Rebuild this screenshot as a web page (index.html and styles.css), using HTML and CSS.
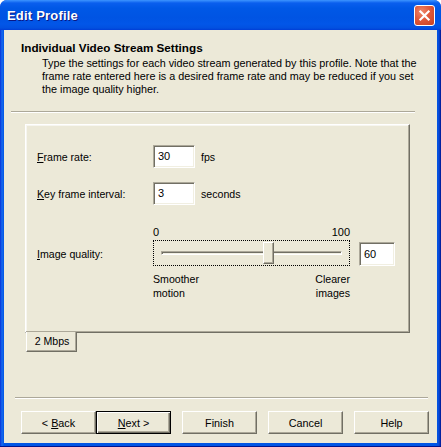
FILE: index.html
```html
<!DOCTYPE html>
<html>
<head>
<meta charset="utf-8">
<link rel="stylesheet" href="styles.css">
</head>
<body>
<div class="window">
  <div class="titlebar">
    <span class="title">Edit Profile</span>
    <span class="close">
      <svg width="21" height="21" viewBox="0 0 21 21">
        <path d="M6 6 L15 15 M15 6 L6 15" stroke="#fff" stroke-width="2.4" stroke-linecap="square"/>
      </svg>
    </span>
  </div>
  <div class="frame">
    <div class="client">
      <div class="header">
        <div class="h-title">Individual Video Stream Settings</div>
        <div class="h-desc">Type the settings for each video stream generated by this profile. Note that the frame rate entered here is a desired frame rate and may be reduced if you set the image quality higher.</div>
      </div>
      <div class="sep sep-top"></div>
      <div class="tabs">
        <div class="panel">
          <div class="row">
            <span class="label"><u>F</u>rame rate:</span>
            <span class="field">30</span>
            <span class="unit">fps</span>
          </div>
          <div class="row row2">
            <span class="label"><u>K</u>ey frame interval:</span>
            <span class="field">3</span>
            <span class="unit">seconds</span>
          </div>
          <div class="quality">
            <span class="label qlabel"><u>I</u>mage quality:</span>
            <div class="slidercol">
              <div class="scale"><span>0</span><span>100</span></div>
              <div class="sliderrow">
                <div class="slider">
                  <div class="track"></div>
                  <div class="thumb"></div>
                </div>
                <span class="field small">60</span>
              </div>
              <div class="ends"><span>Smoother<br>motion</span><span class="right">Clearer<br>images</span></div>
            </div>
          </div>
        </div>
        <div class="tab">2 Mbps</div>
      </div>
      <div class="sep sep-bottom"></div>
      <div class="buttons">
        <div class="group">
          <span class="btn"><span>&lt; <u>B</u>ack</span></span>
          <span class="btn default"><span><u>N</u>ext &gt;</span></span>
        </div>
        <span class="btn"><span>Finish</span></span>
        <span class="btn"><span>Cancel</span></span>
        <span class="btn"><span>Help</span></span>
      </div>
    </div>
  </div>
</div>
</body>
</html>
```
FILE: styles.css
```css
html, body {
  margin: 0;
  padding: 0;
  background: #ffffff;
}
body {
  font-family: Tahoma, "Liberation Sans", Arial, sans-serif;
  font-size: 11px;
  color: #000;
}
.window {
  width: 441px;
  height: 447px;
  display: flex;
  flex-direction: column;
  background: #0a3fd8;
  border-radius: 7px 7px 0 0;
  overflow: hidden;
}
.titlebar {
  height: 30px;
  flex: none;
  display: flex;
  align-items: center;
  justify-content: space-between;
  padding: 0 6px 0 7px;
  background: linear-gradient(to bottom, #3d95ff 0px, #0a5fee 3px, #0058e6 8px, #0054e3 18px, #0256e8 24px, #0250e0 28px, #003dd7 30px);
}
.title {
  color: #fff;
  font-family: "Liberation Sans", Arial, sans-serif;
  font-weight: bold;
  font-size: 13px;
  text-shadow: 1px 1px #0a1883;
  letter-spacing: 0.2px;
  padding-top: 1px;
}
.close {
  width: 21px;
  height: 21px;
  border: 1px solid #fff;
  border-radius: 3px;
  background: radial-gradient(circle at 35% 30%, #f0886a 0%, #e0593b 45%, #c9401f 100%);
  box-sizing: border-box;
  display: flex;
  align-items: center;
  justify-content: center;
  margin-top: 1px;
}
.close svg { width: 19px; height: 19px; }
.frame {
  flex: 1;
  display: flex;
  padding: 0 4px 4px 4px;
  background: linear-gradient(to right, #0831d9 0, #166aee 2px, #0055e5 4px, #0055e5 calc(100% - 4px), #0a4ad7 calc(100% - 2px), #00138c 100%);
  box-shadow: inset 0 -1px #00138c;
}
.client {
  flex: 1;
  background: #ece9d8;
  display: flex;
  flex-direction: column;
}
.header {
  padding: 11px 18px 0 17px;
  height: 73px;
  box-sizing: border-box;
}
.h-title {
  font-weight: bold;
  line-height: 14px;
  font-size: 11.7px;
  font-family: "Liberation Sans", Arial, sans-serif;
}
.h-desc {
  margin-top: 2px;
  padding-left: 21px;
  line-height: 13px;
  font-size: 10.8px;
}
.sep {
  border-top: 1px solid #aca899;
  border-bottom: 1px solid #fff;
  height: 0;
}
.sep-top {
  margin: 8px 22px 0 7px;
}
.tabs {
  margin: 11px 0 0 21px;
  width: 385px;
  display: flex;
  flex-direction: column;
}
.panel {
  height: 209px;
  box-sizing: border-box;
  border-top: 1px solid #fff;
  border-left: 1px solid #fff;
  border-right: 1px solid #716f64;
  border-bottom: 1px solid #716f64;
  box-shadow: inset -1px -1px #aca899, inset 1px 1px #f7f6f0;
  padding: 20px 0 0 11px;
  font-size: 10.6px;
}
.row {
  display: flex;
  align-items: center;
  height: 23px;
}
.row2 { margin-top: 14px; }
.label {
  width: 116px;
  flex: none;
}
.field {
  width: 42px;
  height: 23px;
  box-sizing: border-box;
  background: #fff;
  border-top: 1px solid #aca899;
  border-left: 1px solid #aca899;
  border-right: 1px solid #fff;
  border-bottom: 1px solid #fff;
  box-shadow: inset 1px 1px #716f64, inset -1px -1px #f1efe2;
  padding: 3px 0 0 4px;
  line-height: 14px;
  font-size: 11px;
}
.field.small { width: 36px; height: 24px; margin-left: 9px; margin-top: 2px; padding-top: 4px; }
.unit {
  margin-left: 6px;
}
.quality {
  margin-top: 21px;
  display: flex;
}
.qlabel {
  margin-top: 22px;
}
.slidercol {
  display: flex;
  flex-direction: column;
}
.scale {
  width: 197px;
  display: flex;
  justify-content: space-between;
  line-height: 13px;
  font-size: 11px;
}
.sliderrow {
  display: flex;
  align-items: flex-start;
  margin-top: 1px;
}
.slider {
  width: 197px;
  height: 26px;
  box-sizing: border-box;
  border: 1px dotted #000;
  position: relative;
}
.track {
  position: absolute;
  left: 7px;
  right: 7px;
  top: 10px;
  height: 4px;
  box-sizing: border-box;
  border-top: 1px solid #aca899;
  border-left: 1px solid #aca899;
  border-right: 1px solid #fff;
  border-bottom: 1px solid #fff;
  box-shadow: inset 1px 1px #716f64, inset -1px -1px #f1efe2;
}
.thumb {
  position: absolute;
  left: 109px;
  top: 1px;
  width: 11px;
  height: 22px;
  box-sizing: border-box;
  background: #ece9d8;
  border-top: 1px solid #fff;
  border-left: 1px solid #fff;
  border-right: 1px solid #716f64;
  border-bottom: 1px solid #716f64;
  box-shadow: inset -1px -1px #aca899;
}
.ends {
  width: 197px;
  display: flex;
  justify-content: space-between;
  margin-top: 6px;
  line-height: 14px;
}
.ends .right { text-align: right; }
.tab {
  width: 51px;
  height: 20px;
  margin: -1px 0 0 1px;
  box-sizing: border-box;
  position: relative;
  background: #ece9d8;
  border-left: 1px solid #fff;
  border-right: 1px solid #716f64;
  border-bottom: 1px solid #716f64;
  box-shadow: inset -1px -1px #aca899;
  text-align: center;
  line-height: 18px;
  font-size: 10.6px;
  padding-left: 1px;
}
.sep-bottom {
  margin: 45px 9px 0 11px;
}
.buttons {
  margin: 12px 0 0 17px;
  display: flex;
  gap: 11px;
}
.group { display: flex; }
.btn {
  width: 75px;
  height: 23px;
  box-sizing: border-box;
  display: flex;
  align-items: center;
  justify-content: center;
  background: #ece9d8;
  border-top: 1px solid #fff;
  border-left: 1px solid #fff;
  border-right: 1px solid #716f64;
  border-bottom: 1px solid #716f64;
  box-shadow: inset -1px -1px #aca899;
  font-size: 10.8px;
}
.btn.default {
  border: 1px solid #000;
  box-shadow: inset 1px 1px #fff, inset -1px -1px #716f64, inset -2px -2px #aca899;
}
u { text-decoration: underline; text-underline-offset: 1px; }
```
